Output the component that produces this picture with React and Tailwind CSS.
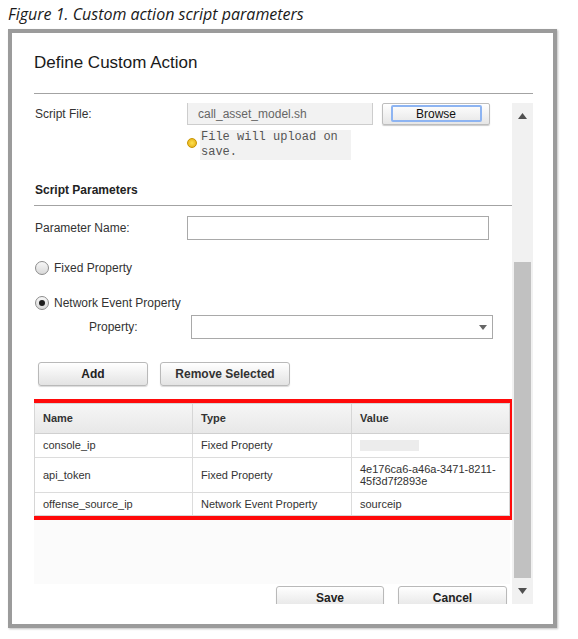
import React from "react";

const sans = { fontFamily: '"Liberation Sans", Arial, sans-serif' };

function Btn({ children, className = "" }) {
  return (
    <div
      className={`h-[24px] flex items-center justify-center border border-[#b9b9b9] rounded-[3px] bg-linear-to-b from-white to-[#e3e3e3] shadow-[0_1px_1px_rgba(0,0,0,0.15)] text-[12px] font-bold text-[#222] ${className}`}
    >
      {children}
    </div>
  );
}

function Radio({ checked }) {
  return (
    <div className="w-[14px] h-[14px] rounded-full border border-[#8c8c8c] bg-linear-to-b from-[#f7f7f7] to-[#d9d9d9] flex items-center justify-center shrink-0">
      {checked && <div className="w-[6px] h-[6px] rounded-full bg-[#1e1e1e]" />}
    </div>
  );
}

function Tri({ up }) {
  return (
    <svg width="9" height="6" viewBox="0 0 9 6">
      {up ? (
        <polygon points="0,6 9,6 4.5,0" fill="#505050" />
      ) : (
        <polygon points="0,0 9,0 4.5,6" fill="#505050" />
      )}
    </svg>
  );
}

const rows = [
  { name: "console_ip", type: "Fixed Property", value: null, h: "h-[24px]" },
  {
    name: "api_token",
    type: "Fixed Property",
    value: "4e176ca6-a46a-3471-8211-\n45f3d7f2893e",
    h: "h-[35px]",
  },
  {
    name: "offense_source_ip",
    type: "Network Event Property",
    value: "sourceip",
    h: "h-[22px]",
  },
];

export default function App() {
  return (
    <div className="w-[578px] h-[639px] bg-white overflow-hidden" style={sans}>
      <div
        className="h-[29px] pl-[8px] pt-[3px] text-[16px] italic text-[#1a1a1a] leading-[22px]"
        style={{ fontFamily: '"Open Sans", "Noto Sans", sans-serif' }}
      >
        Figure 1. Custom action script parameters
      </div>
      <div className="ml-[8px] w-[549px] h-[599px] border-4 border-[#9b9b9b] shadow-[1px_1px_2px_rgba(0,0,0,0.25)] bg-white pl-[22px] pr-[20px]">
        <div className="h-[60px] pt-[19px] text-[17px] text-[#1a1a1a] leading-[22px]">
          Define Custom Action
        </div>
        <div className="h-px bg-[#a3a3a3]" />
        <div className="h-[9px]" />
        <div className="flex h-[501px] overflow-hidden">
          <div className="w-[478px] flex flex-col">
            {/* Script file */}
            <div className="flex items-center h-[22px] shrink-0">
              <div className="w-[153px] pl-[1px] text-[12px] text-[#333]">Script File:</div>
              <div className="w-[186px] h-[22px] bg-[#f2f2f2] border border-t-0 border-[#cdcdcd] flex items-center pl-[10px] text-[12px] text-[#666]">
                call_asset_model.sh
              </div>
              <div className="ml-[9px] w-[108px] h-[22px] border border-[#bdbdbd] rounded-[2px] bg-linear-to-b from-white to-[#e6e6e6] shadow-[0_1px_1px_rgba(0,0,0,0.2)] flex items-start justify-center">
                <div className="mt-[1px] w-[91px] h-[17px] border-2 border-[#8db4f2] rounded-[2px] flex items-center justify-center text-[12px] text-[#111]">
                  Browse
                </div>
              </div>
            </div>
            {/* message */}
            <div className="flex items-start mt-[5px] ml-[153px] shrink-0">
              <div className="mt-[8px] w-[10px] h-[10px] rounded-full bg-radial from-[#ffe34d] to-[#e0a800] border border-[#c99400]" />
              <div
                className="ml-[3px] w-[151px] h-[30px] bg-[#f2f2f2] text-[12px] leading-[15px] text-[#555] pl-[1px]"
                style={{ fontFamily: '"Liberation Mono", "DejaVu Sans Mono", monospace' }}
              >
                File will upload on
                <br />
                save.
              </div>
            </div>
            {/* Script params heading */}
            <div className="mt-[23px] h-[23px] border-b border-[#a3a3a3] text-[12px] font-bold text-[#222] leading-[14px] pl-[1px] shrink-0">
              Script Parameters
            </div>
            {/* Parameter Name */}
            <div className="mt-[10px] flex items-center h-[24px] shrink-0">
              <div className="w-[153px] pl-[1px] text-[12px] text-[#333]">Parameter Name:</div>
              <div className="w-[302px] h-[24px] border border-[#a9a9a9] bg-white" />
            </div>
            {/* Fixed property */}
            <div className="mt-[20px] flex items-center h-[16px] pl-[1px] shrink-0">
              <Radio />
              <span className="ml-[5px] text-[12px] text-[#333]">Fixed Property</span>
            </div>
            <div className="mt-[19px] flex items-center h-[16px] pl-[1px] shrink-0">
              <Radio checked />
              <span className="ml-[5px] text-[12px] text-[#333]">Network Event Property</span>
            </div>
            {/* Property select */}
            <div className="mt-[4px] flex items-center h-[24px] shrink-0">
              <div className="w-[157px] pl-[55px] text-[12px] text-[#333]">Property:</div>
              <div className="w-[302px] h-[24px] border border-[#a9a9a9] bg-white flex items-center justify-end pr-[5px]">
                <svg width="8" height="5" viewBox="0 0 8 5">
                  <polygon points="0,0 8,0 4,5" fill="#666" />
                </svg>
              </div>
            </div>
            {/* Add/remove */}
            <div className="mt-[23px] flex pl-[4px] gap-[12px] shrink-0">
              <Btn className="w-[110px]">Add</Btn>
              <Btn className="w-[130px] text-[#333]">Remove Selected</Btn>
            </div>
            {/* Table with red annotation */}
            <div className="mt-[13px] -ml-[4px] w-[484px] border-4 border-[#ff0a0a] shrink-0">
              <div className="border border-[#d6d6d6] bg-white">
                <div className="grid grid-cols-[158px_159px_157px] h-[30px] bg-linear-to-b from-[#f6f6f6] to-[#e8e8e8] border-b border-[#d0d0d0] text-[11px] font-bold text-[#333]">
                  <div className="flex items-center pl-[8px] border-r border-[#d6d6d6]">Name</div>
                  <div className="flex items-center pl-[8px] border-r border-[#d6d6d6]">Type</div>
                  <div className="flex items-center pl-[8px]">Value</div>
                </div>
                {rows.map((r, i) => (
                  <div
                    key={r.name}
                    className={`grid grid-cols-[158px_159px_157px] ${r.h} text-[11px] text-[#333] ${
                      i < rows.length - 1 ? "border-b border-[#dcdcdc]" : ""
                    }`}
                  >
                    <div className="flex items-center pl-[8px] border-r border-[#dcdcdc]">{r.name}</div>
                    <div className="flex items-center pl-[8px] border-r border-[#dcdcdc]">{r.type}</div>
                    <div className="flex items-center pl-[8px] leading-[12px] whitespace-pre">
                      {r.value === null ? (
                        <div className="w-[59px] h-[11px] bg-[#ececec]" />
                      ) : (
                        r.value
                      )}
                    </div>
                  </div>
                ))}
              </div>
            </div>
            <div className="h-[64px] w-[476px] bg-[#fbfbfb] shrink-0" />
            {/* Save / Cancel */}
            <div className="mt-[2px] flex pl-[242px] gap-[14px] shrink-0">
              <Btn className="w-[108px]">Save</Btn>
              <Btn className="w-[109px]">Cancel</Btn>
            </div>
          </div>
          {/* Scrollbar */}
          <div className="w-[21px] bg-[#f1f1f1] flex flex-col items-center">
            <div className="h-[26px] w-full flex items-center justify-center">
              <Tri up />
            </div>
            <div className="mt-[133px] w-[17px] h-[316px] bg-[#c1c1c1]" />
            <div className="flex-1 w-full flex items-center justify-center">
              <Tri />
            </div>
          </div>
        </div>
      </div>
    </div>
  );
}
